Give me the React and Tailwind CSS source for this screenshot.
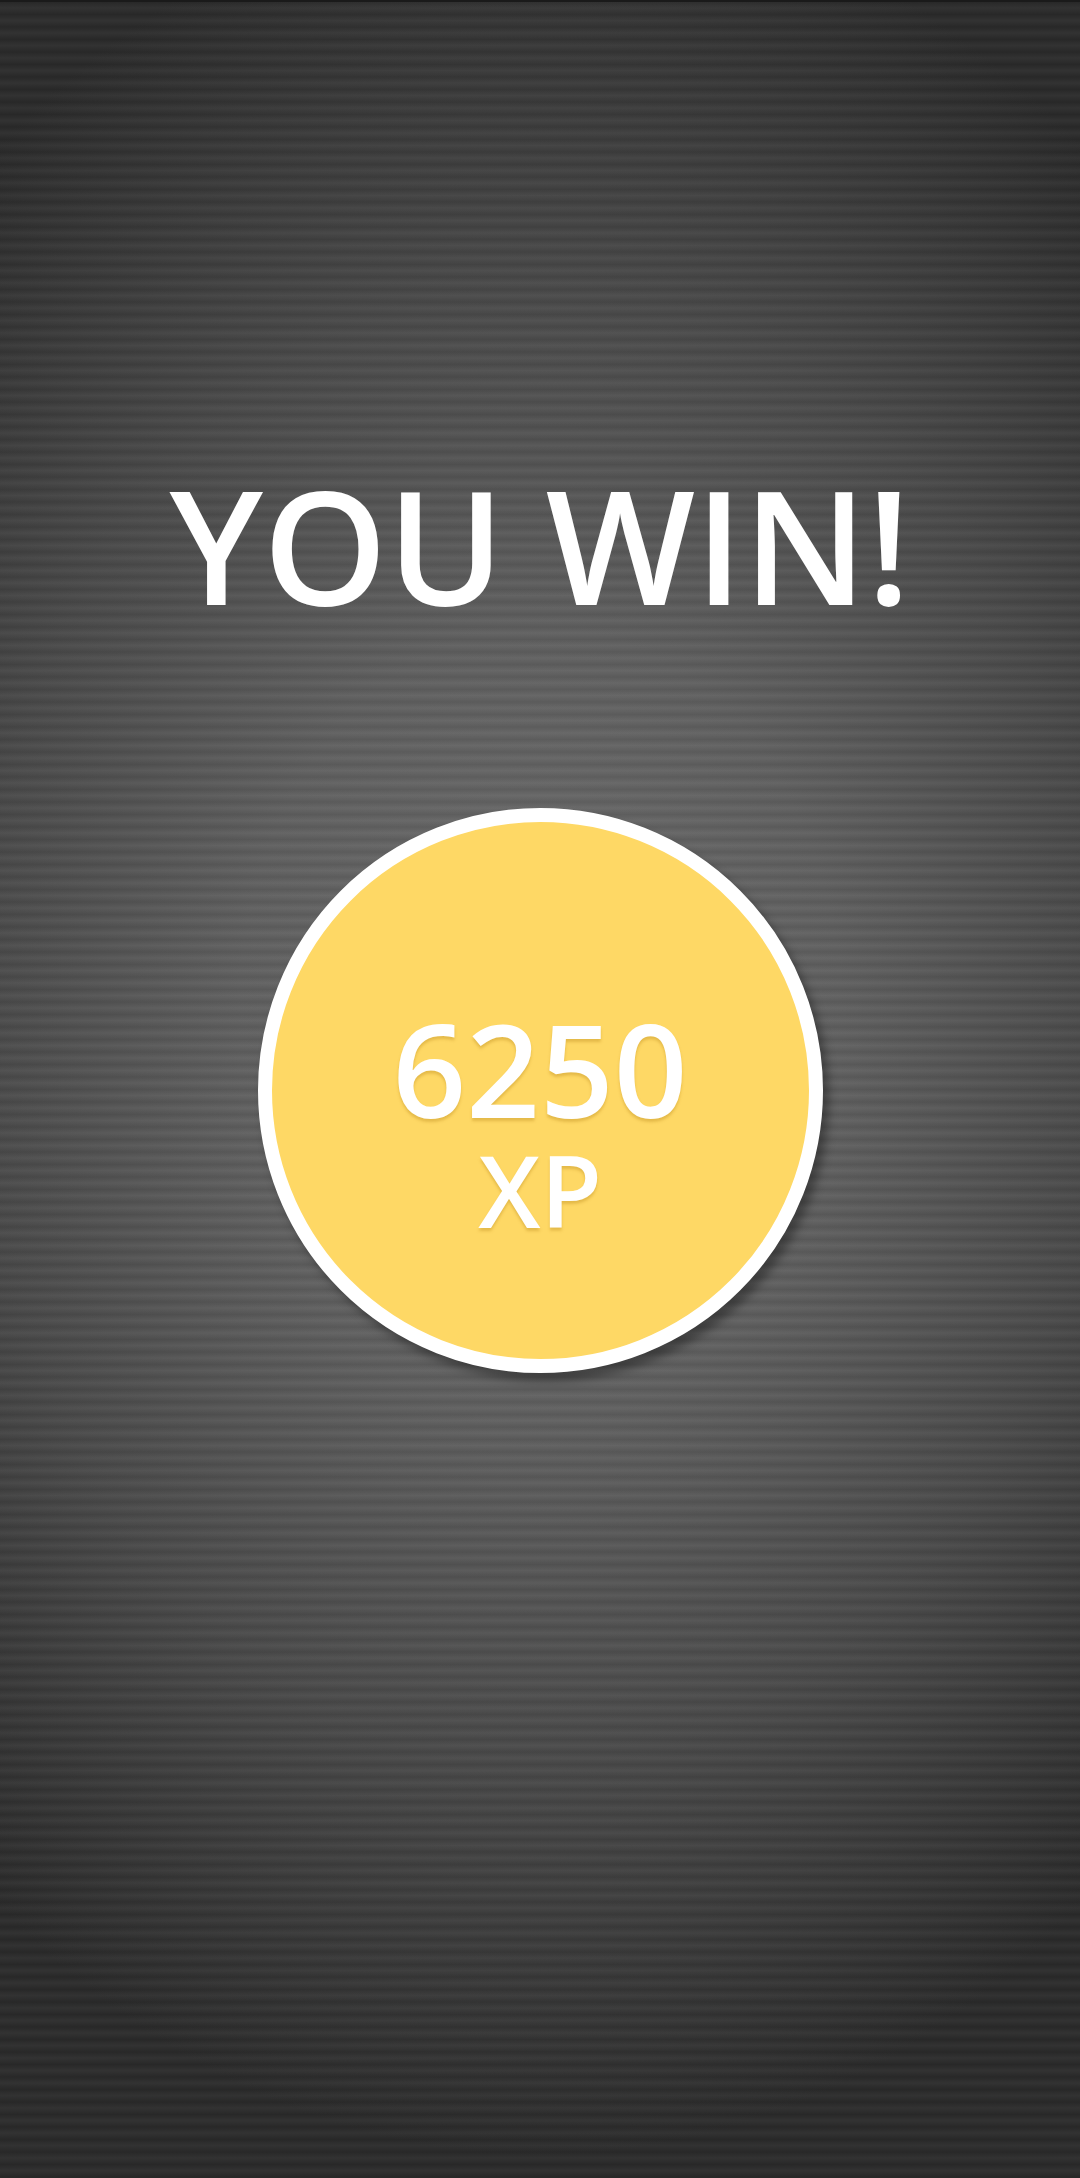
import React from "react";

export default function App() {
  return (
    <div
      className="relative w-[1080px] h-[2178px] overflow-hidden flex flex-col items-center bg-[#2a2a2a] border-t-2 border-[#1a1a1a]"
      style={{ fontFamily: "'Open Sans', 'Noto Sans', sans-serif" }}
    >
      <div className="absolute inset-0 bg-[radial-gradient(ellipse_80%_52%_at_50%_47%,#6c6c6c_0%,#606060_35%,#4a4a4a_65%,#2b2b2b_100%)]" />
      <div className="absolute inset-0 bg-[repeating-linear-gradient(to_bottom,rgba(0,0,0,0.07)_0px,rgba(255,255,255,0.035)_6px,rgba(0,0,0,0.07)_12.5px)]" />
      <div className="relative flex flex-col items-center pt-[463px]">
        <h1 className="text-[158px] leading-none font-semibold text-white">
          YOU WIN!
        </h1>
        <div className="mt-[185px] w-[565px] h-[565px] rounded-full bg-[#fed865] border-[14px] border-white shadow-[6px_8px_10px_rgba(0,0,0,0.35)] flex flex-col items-center">
          <div className="flex flex-col items-center pt-[182px] text-white font-semibold [text-shadow:0_3px_3px_rgba(180,130,20,0.35)]">
            <span className="text-[129px] leading-none">6250</span>
            <span className="text-[100px] leading-none mt-[6px]">XP</span>
          </div>
        </div>
      </div>
    </div>
  );
}
